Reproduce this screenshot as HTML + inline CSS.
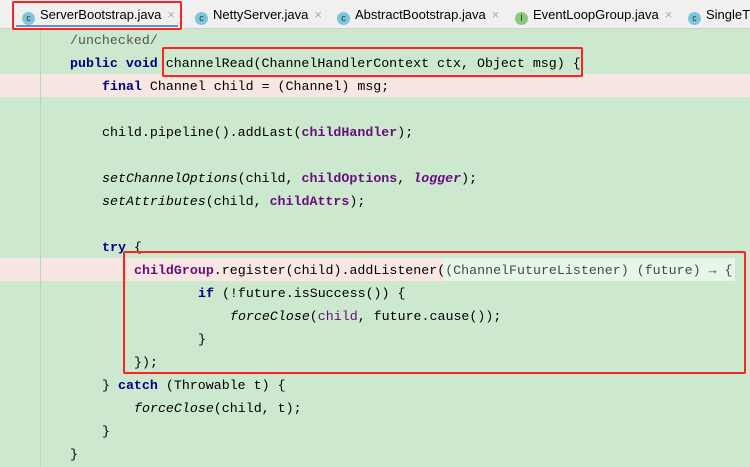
<!DOCTYPE html><html><head><style>
body{margin:0;width:750px;height:467px;overflow:hidden;background:#cce8cf;position:relative;font-family:"Liberation Mono",monospace}
.tabs{position:absolute;left:0;top:0;width:750px;height:28px;background:#f0f0f0;border-bottom:1px solid #d0d0d0;font-family:"Liberation Sans",sans-serif;font-size:13px;white-space:nowrap;overflow:hidden}
.tab{position:absolute;top:0;height:28px;line-height:30px;color:#000;white-space:nowrap}
.ic{display:inline-block;width:13px;height:13px;border-radius:50%;background:#7fc6dd;color:#333;font-size:9px;line-height:13px;text-align:center;vertical-align:-2px;margin-right:5px}
.x{color:#aaa;margin-left:6px}
.l{position:absolute;left:0;height:23px;line-height:25px;font-size:13.3px;white-space:pre;color:#000}
.k{color:#000080;font-weight:bold}.f{color:#660e7a;font-weight:bold}.i{font-style:italic}.p{color:#660e7a}
.pink{position:absolute;left:0;width:750px;height:23px;background:#f7e6e2}
.box{position:absolute;border:2.5px solid #f22;border-radius:2px}
.g{position:absolute;top:28px;height:439px;width:1px;background:#b8d6bc}
.lam{color:#3d4d3d}
</style></head><body>
<div class="pink" style="top:74px"></div>
<div class="pink" style="top:258px;width:444px"></div>
<div style="position:absolute;left:444px;top:258px;width:291px;height:23px;background:#e9f5e9"></div>
<div class="g" style="left:40px"></div>
<div class="tabs">
<div class="tab" style="left:22px"><span class="ic">c</span>ServerBootstrap.java<span class="x">×</span></div>
<div style="position:absolute;left:16px;top:25px;width:162px;height:2px;background:#6a8fc0"></div>
<div class="tab" style="left:195px"><span class="ic">c</span>NettyServer.java<span class="x">×</span></div>
<div class="tab" style="left:337px"><span class="ic">c</span>AbstractBootstrap.java<span class="x">×</span></div>
<div class="tab" style="left:515px"><span class="ic" style="background:#8fc77f">I</span>EventLoopGroup.java<span class="x">×</span></div>
<div class="tab" style="left:688px"><span class="ic">c</span>SingleTh</div>
</div>
<div class="l" style="top:28px;left:70px;color:#555">/unchecked/</div>
<div class="l" style="top:51px;left:70px"><span class="k">public void</span> channelRead(ChannelHandlerContext ctx, Object msg) {</div>
<div class="l" style="top:74px;left:102px"><span class="k">final</span> Channel child = (Channel) msg;</div>
<div class="l" style="top:120px;left:102px">child.pipeline().addLast(<span class="f">childHandler</span>);</div>
<div class="l" style="top:166px;left:102px"><span class="i">setChannelOptions</span>(child, <span class="f">childOptions</span>, <span class="f i">logger</span>);</div>
<div class="l" style="top:189px;left:102px"><span class="i">setAttributes</span>(child, <span class="f">childAttrs</span>);</div>
<div class="l" style="top:235px;left:102px"><span class="k">try</span> {</div>
<div class="l" style="top:258px;left:134px"><span class="f">childGroup</span>.register(child).addListener(<span class="lam">(ChannelFutureListener) (future) → {</span></div>
<div class="l" style="top:281px;left:198px"><span class="k">if</span> (!future.isSuccess()) {</div>
<div class="l" style="top:304px;left:230px"><span class="i">forceClose</span>(<span class="p">child</span>, future.cause());</div>
<div class="l" style="top:327px;left:198px">}</div>
<div class="l" style="top:350px;left:134px">});</div>
<div class="l" style="top:373px;left:102px">} <span class="k">catch</span> (Throwable t) {</div>
<div class="l" style="top:396px;left:134px"><span class="i">forceClose</span>(child, t);</div>
<div class="l" style="top:419px;left:102px">}</div>
<div class="l" style="top:442px;left:70px">}</div>
<div class="box" style="left:12px;top:1px;width:166px;height:25px"></div>
<div class="box" style="left:162px;top:47px;width:417px;height:26px"></div>
<div class="box" style="left:123px;top:251px;width:619px;height:119px"></div>
</body></html>
